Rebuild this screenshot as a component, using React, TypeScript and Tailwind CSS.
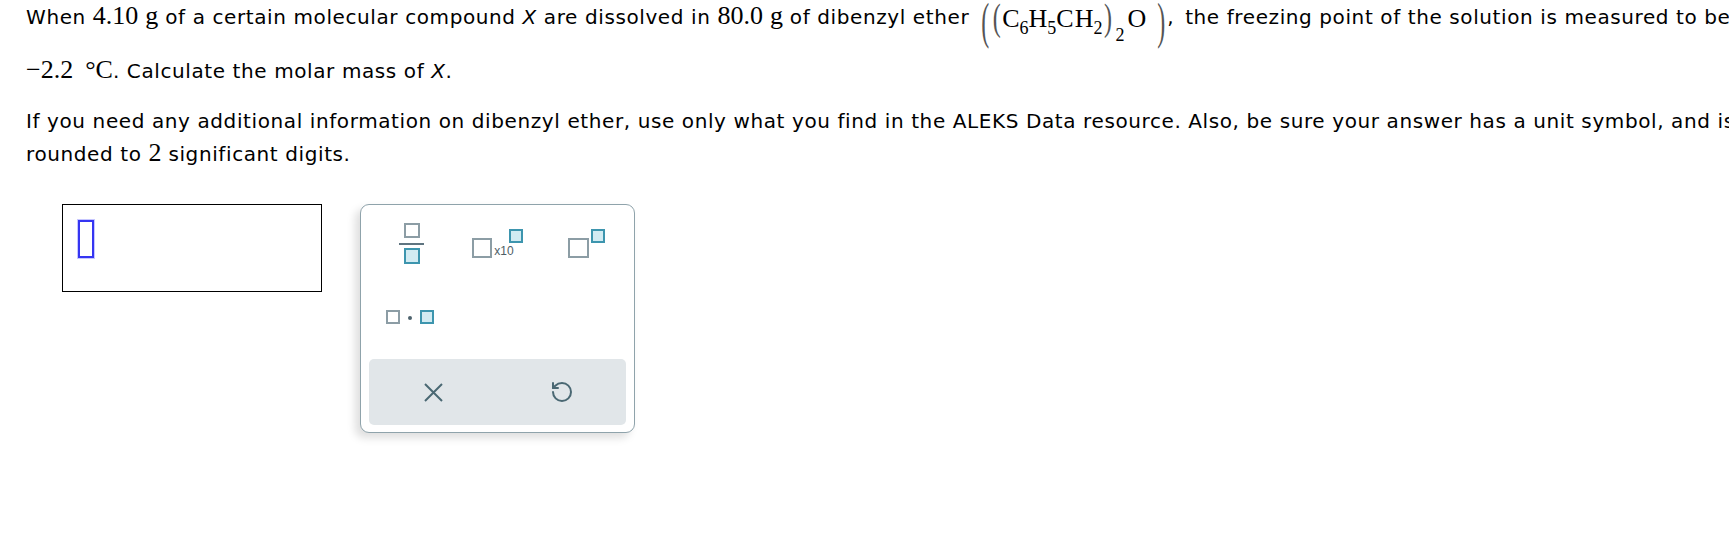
import React from "react";
import { RotateCcw } from "lucide-react";

const M = ({ children }: { children: React.ReactNode }) => (
  <span className="font-['Liberation_Serif',serif] text-[26px] tracking-normal">{children}</span>
);

const Sub = ({ children, low = false }: { children: React.ReactNode; low?: boolean }) => (
  <span className={"relative text-[18px] " + (low ? "top-[14px] ml-[2px] mr-[3px]" : "top-[7px]")}>{children}</span>
);

const Paren = ({ ch, big = false }: { ch: string; big?: boolean }) => (
  <span
    className={
      "inline-block text-center leading-[20px] text-[24px] text-[#555] " +
      (big ? "w-[12px] scale-y-[2.15] translate-y-[2px]" : "w-[11px] scale-y-[1.56] translate-y-[-1px]")
    }
  >
    {ch}
  </span>
);

function Formula() {
  return (
    <span className="relative top-[3px] ml-[3px] font-['Liberation_Serif',serif] text-[26px] tracking-normal whitespace-nowrap">
      <Paren ch="(" big />
      <Paren ch="(" />
      C<Sub>6</Sub>H<Sub>5</Sub>C<span className="ml-[1px]">H</span>
      <Sub>2</Sub>
      <Paren ch=")" />
      <Sub low>2</Sub>O<span className="inline-block w-[9px]" />
      <Paren ch=")" big />
    </span>
  );
}

function Square({ blue = false, w, h }: { blue?: boolean; w: string; h: string }) {
  return (
    <span
      className={
        "block border-2 " +
        w +
        " " +
        h +
        " " +
        (blue ? "border-[#3d95ae] bg-[#d2ebf2]" : "border-[#8c9da5] bg-white")
      }
    />
  );
}

export default function App() {
  return (
    <div className="w-screen h-[553px] overflow-hidden bg-white">
      <div className="pl-[26px] text-[20px] leading-[32px] tracking-[0.6px] font-['DejaVu_Sans',sans-serif] text-black whitespace-nowrap">
        <div className="h-[54px]">
          When <M>4.10</M> <M>g</M> of a certain molecular compound <i>X</i> are dissolved in <M>80.0</M>{" "}
          <M>g</M> of dibenzyl ether <Formula />,<span className="ml-[4px]" /> the freezing point of the solution is
          measured to be
        </div>
        <div>
          <M>
            −2.2<span className="inline-block w-[12px]" />°C
          </M>
          . Calculate the molar mass of <i>X</i>.
        </div>
        <div className="mt-[18px]">
          If you need any additional information on dibenzyl ether, use only what you find in the ALEKS Data
          resource. Also, be sure your answer has a unit symbol, and is
        </div>
        <div>
          rounded to <M>2</M> significant digits.
        </div>
      </div>

      <div className="mt-[34px] ml-[62px] flex items-start gap-[38px]">
        <div className="w-[260px] h-[88px] border border-black pl-[15px] pt-[15px]">
          <div className="w-[16px] h-[38px] border-2 border-[#3535f2] shadow-[0_0_0_1px_rgba(130,130,255,0.45)]" />
        </div>

        <div className="w-[275px] h-[229px] rounded-[9px] border border-[#8fa3ab] bg-white shadow-[-5px_5px_8px_rgba(0,0,0,0.13)] px-[8px] pb-[7px] flex flex-col">
          <div className="grid grid-cols-3 grid-rows-[76px_72px]">
            <div className="flex items-center justify-center">
              <div className="flex flex-col items-center">
                <Square w="w-[16px]" h="h-[15px]" />
                <span className="block w-[25px] h-[2px] bg-[#5f7480] mt-[5px]" />
                <span className="mt-[3px]">
                  <Square blue w="w-[16px]" h="h-[16px]" />
                </span>
              </div>
            </div>
            <div className="flex items-center justify-center">
              <div className="flex items-end h-[29px]">
                <Square w="w-[20px]" h="h-[20px]" />
                <span className="ml-[2px] mb-[1px] text-[12px] leading-none text-[#4d5d65] font-['Liberation_Sans',sans-serif]">
                  x10
                </span>
                <span className="self-start ml-[-5px]">
                  <Square blue w="w-[14px]" h="h-[14px]" />
                </span>
              </div>
            </div>
            <div className="flex items-center justify-center">
              <div className="flex items-end h-[29px] ml-[6px]">
                <Square w="w-[21px]" h="h-[20px]" />
                <span className="self-start ml-[2px]">
                  <Square blue w="w-[14px]" h="h-[14px]" />
                </span>
              </div>
            </div>
            <div className="flex items-center justify-center">
              <div className="flex items-center gap-[8px] mr-[3px]">
                <Square w="w-[14px]" h="h-[14px]" />
                <span className="block w-[4px] h-[4px] rounded-full bg-[#4d636d] mt-[2px]" />
                <Square blue w="w-[14px]" h="h-[14px]" />
              </div>
            </div>
          </div>
          <div className="mt-[6px] h-[66px] rounded-[5px] bg-[#e1e6e9] grid grid-cols-2">
            <div className="flex items-center justify-center">
              <svg width="19" height="19" viewBox="0 0 19 19" fill="none" stroke="#4a6873" strokeWidth="2">
                <path d="M1 1 L18 18 M18 1 L1 18" />
              </svg>
            </div>
            <div className="flex items-center justify-center">
              <RotateCcw size={24} color="#4a6873" strokeWidth={2} />
            </div>
          </div>
        </div>
      </div>
    </div>
  );
}
